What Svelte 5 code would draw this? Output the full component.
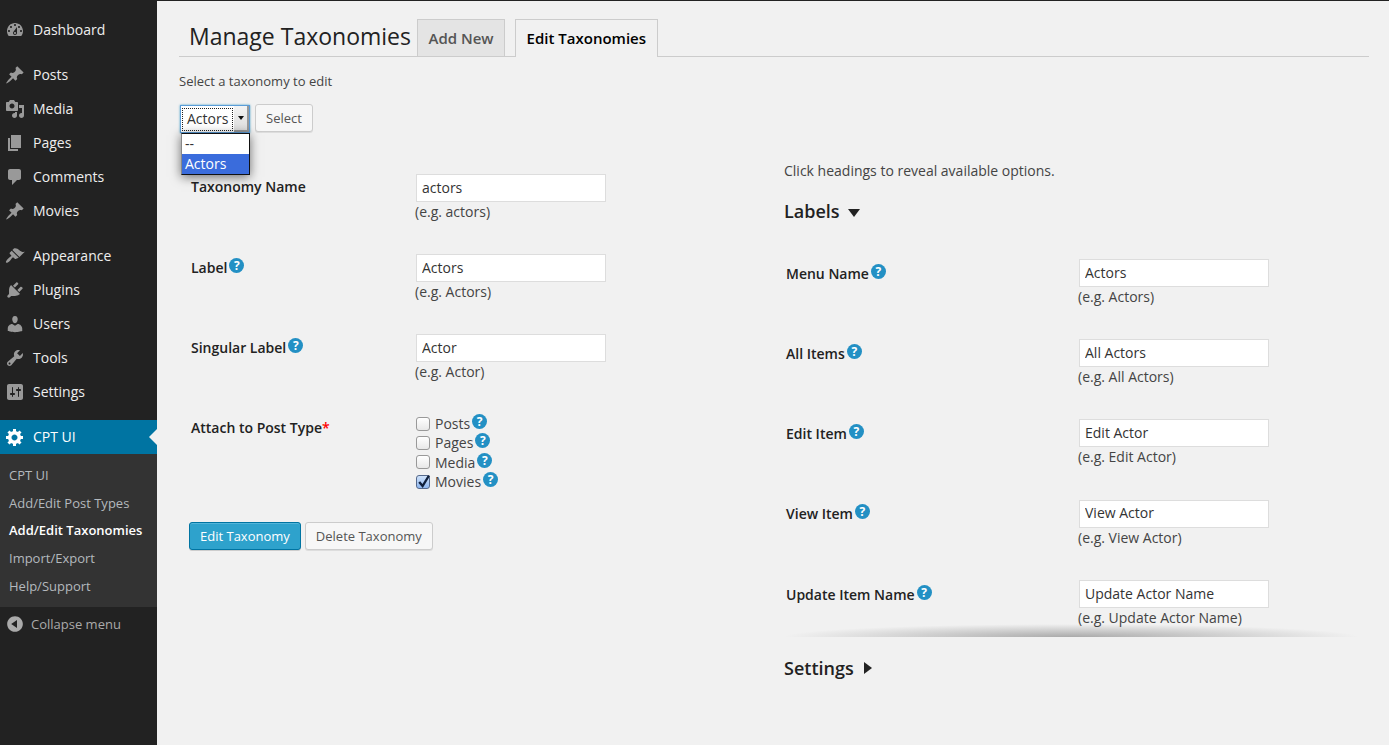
<script>
	const icons = {
		dashboard: 'M3.76 16h12.48c1.1-1.37 1.76-3.11 1.76-5 0-4.42-3.58-8-8-8s-8 3.58-8 8c0 1.89.66 3.63 1.76 5zM10 4c.55 0 1 .45 1 1s-.45 1-1 1-1-.45-1-1 .45-1 1-1zM6 6c.55 0 1 .45 1 1s-.45 1-1 1-1-.45-1-1 .45-1 1-1zm8 0c.55 0 1 .45 1 1s-.45 1-1 1-1-.45-1-1 .45-1 1-1zm-5.37 5.55L12 7v6c0 1.1-.9 2-2 2s-2-.9-2-2c0-.57.24-1.08.63-1.45zM4 10c.55 0 1 .45 1 1s-.45 1-1 1-1-.45-1-1 .45-1 1-1zm12 0c.55 0 1 .45 1 1s-.45 1-1 1-1-.45-1-1 .45-1 1-1zm-5 3c0-.55-.45-1-1-1s-1 .45-1 1 .45 1 1 1 1-.45 1-1z',
		post: 'M10.44 3.02l1.82-1.82 6.36 6.35-1.83 1.82c-1.05-.68-2.48-.57-3.41.36l-.75.75c-.92.93-1.04 2.35-.35 3.41l-1.83 1.82-2.41-2.41-2.8 2.79c-.42.42-3.38 2.71-3.8 2.29s1.86-3.39 2.28-3.81l2.79-2.79L4.1 9.36l1.83-1.82c1.05.69 2.48.57 3.4-.36l.75-.75c.93-.92 1.05-2.35.36-3.41z',
		media: 'M13 11V4c0-.55-.45-1-1-1h-1.67L9 1H5L3.67 3H2c-.55 0-1 .45-1 1v7c0 .55.45 1 1 1h10c.55 0 1-.45 1-1zM7 4.5c1.38 0 2.5 1.12 2.5 2.5S8.38 9.5 7 9.5 4.5 8.38 4.5 7 5.62 4.5 7 4.5zM14 6h5v10.5c0 1.38-1.12 2.5-2.5 2.5S14 17.88 14 16.5s1.12-2.5 2.5-2.5c.17 0 .34.02.5.05V9h-3V6zm-4 8.05V13h2v3.5c0 1.38-1.12 2.5-2.5 2.5S7 17.88 7 16.5 8.12 14 9.5 14c.17 0 .34.02.5.05z',
		page: 'M6 15V2h10v13H6zm-1 1h8v2H3V5h2v11z',
		comments: 'M5 2h9c1.1 0 2 .9 2 2v7c0 1.1-.9 2-2 2h-2l-5 5v-5H5c-1.1 0-2-.9-2-2V4c0-1.1.9-2 2-2z',
		appearance: 'M14.48 11.06L7.41 3.99l1.5-1.5c.5-.56 2.3-.47 3.51.32 1.21.8 1.43 1.28 2.91 2.1 1.18.64 2.45 1.26 4.45.85zm-.71.71L6.7 4.7 4.93 6.47c-.39.39-.39 1.02 0 1.41l1.06 1.06c.39.39.39 1.03 0 1.42-.6.6-1.43 1.11-2.21 1.69-.35.26-.7.53-1.01.84-1.34 1.37-2.37 3.01-1.67 3.7.7.7 2.3-.33 3.67-1.67.31-.31.58-.66.85-1.02.58-.78 1.09-1.61 1.69-2.21.39-.39 1.02-.39 1.41 0l1.06 1.06c.39.39 1.02.39 1.41 0z',
		plugins: 'M13.11 4.36L9.87 7.6 8 5.73l3.24-3.24c.35-.34 1.05-.2 1.56.32.52.51.66 1.21.31 1.55zm-8 1.77l.91-1.12 9.01 9.01-1.19.84c-.71.71-2.63 1.16-3.82 1.16H6.14L4.9 17.26c-.59.59-1.54.59-2.12 0-.59-.58-.59-1.53 0-2.12l1.24-1.24v-3.88c0-1.13.4-3.19 1.09-3.89zm7.26 3.97l3.24-3.24c.34-.35 1.04-.21 1.55.31.52.51.66 1.21.31 1.55l-3.24 3.25z',
		users: 'M10 9.25c-2.27 0-2.73-3.44-2.73-3.44C7 4.02 7.82 2 9.97 2c2.16 0 2.98 2.02 2.71 3.81 0 0-.41 3.44-2.68 3.44zm0 2.57L12.72 10c2.39 0 4.52 2.33 4.52 4.53v2.49s-3.65 1.13-7.24 1.13c-3.65 0-7.24-1.13-7.24-1.13v-2.49c0-2.25 1.94-4.48 4.47-4.48z',
		tools: 'M16.68 9.77c-1.34 1.34-3.3 1.67-4.95.99l-5.41 6.52c-.99.99-2.59.99-3.58 0s-.99-2.59 0-3.57l6.52-5.42c-.68-1.65-.35-3.61.99-4.95 1.28-1.28 3.12-1.62 4.72-1.06l-2.89 2.89 2.82 2.82 2.86-2.87c.53 1.58.18 3.39-1.08 4.65zM3.81 16.21c.4.39 1.04.39 1.43 0 .4-.4.4-1.04 0-1.43-.39-.4-1.03-.4-1.43 0-.39.39-.39 1.03 0 1.43z',
		settings: 'M18 16V4c0-1.1-.9-2-2-2H4c-1.1 0-2 .9-2 2v12c0 1.1.9 2 2 2h12c1.1 0 2-.9 2-2zM8 11h1c.55 0 1 .45 1 1s-.45 1-1 1H8v1.5c0 .28-.22.5-.5.5s-.5-.22-.5-.5V13H6c-.55 0-1-.45-1-1s.45-1 1-1h1V5.5c0-.28.22-.5.5-.5s.5.22.5.5V11zm5-2h-1c-.55 0-1-.45-1-1s.45-1 1-1h1V5.5c0-.28.22-.5.5-.5s.5.22.5.5V7h1c.55 0 1 .45 1 1s-.45 1-1 1h-1v5.5c0 .28-.22.5-.5.5s-.5-.22-.5-.5V9z',
		gear: 'M18 12h-2.18c-.17.7-.44 1.35-.81 1.93l1.54 1.54-2.1 2.1-1.54-1.54c-.58.36-1.23.63-1.91.79V19H8v-2.18c-.68-.16-1.33-.43-1.91-.79l-1.54 1.54-2.12-2.12 1.54-1.54c-.36-.58-.63-1.23-.79-1.91H1V9.03h2.17c.16-.7.44-1.35.8-1.94L2.43 5.55l2.1-2.1 1.54 1.54c.58-.37 1.24-.64 1.93-.81V2h3v2.18c.68.16 1.33.43 1.91.79l1.54-1.54 2.12 2.12-1.54 1.54c.36.59.64 1.24.8 1.94H18V12zm-8.5 1.5c1.66 0 3-1.34 3-3s-1.34-3-3-3-3 1.34-3 3 1.34 3 3 3z',
		collapse: 'M10 2.16c4.33 0 7.84 3.51 7.84 7.84s-3.51 7.84-7.84 7.84S2.16 14.33 2.16 10 5.71 2.16 10 2.16zm2 11.72V6.12L6.18 9.97z'
	};

	const menu = [
		[{ label: 'Dashboard', icon: 'dashboard' }],
		[
			{ label: 'Posts', icon: 'post' },
			{ label: 'Media', icon: 'media' },
			{ label: 'Pages', icon: 'page' },
			{ label: 'Comments', icon: 'comments' },
			{ label: 'Movies', icon: 'post' }
		],
		[
			{ label: 'Appearance', icon: 'appearance' },
			{ label: 'Plugins', icon: 'plugins' },
			{ label: 'Users', icon: 'users' },
			{ label: 'Tools', icon: 'tools' },
			{ label: 'Settings', icon: 'settings' }
		]
	];

	const submenu = ['CPT UI', 'Add/Edit Post Types', 'Add/Edit Taxonomies', 'Import/Export', 'Help/Support'];

	const leftRows = [
		{ label: 'Taxonomy Name', value: 'actors', hint: '(e.g. actors)' },
		{ label: 'Label', value: 'Actors', hint: '(e.g. Actors)', help: true },
		{ label: 'Singular Label', value: 'Actor', hint: '(e.g. Actor)', help: true }
	];

	const rightRows = [
		{ label: 'Menu Name', value: 'Actors', hint: '(e.g. Actors)', help: true },
		{ label: 'All Items', value: 'All Actors', hint: '(e.g. All Actors)', help: true },
		{ label: 'Edit Item', value: 'Edit Actor', hint: '(e.g. Edit Actor)', help: true },
		{ label: 'View Item', value: 'View Actor', hint: '(e.g. View Actor)', help: true },
		{ label: 'Update Item Name', value: 'Update Actor Name', hint: '(e.g. Update Actor Name)', help: true }
	];

	const postTypes = [
		{ label: 'Posts', checked: false },
		{ label: 'Pages', checked: false },
		{ label: 'Media', checked: false },
		{ label: 'Movies', checked: true }
	];
</script>

{#snippet icon(name)}
	<svg class="icon" viewBox="0 0 20 20" width="20" height="20"><path fill-rule="evenodd" d={icons[name]} /></svg>
{/snippet}

{#snippet help()}
	<span class="help">?</span>
{/snippet}

{#snippet field(row)}
	<div class="field">
		<div class="field-label" class:with-help={row.help}>{row.label}{#if row.help}{@render help()}{/if}</div>
		<div class="field-control">
			<input type="text" value={row.value} />
			<span class="hint">{row.hint}</span>
		</div>
	</div>
{/snippet}

<div class="wrap">
	<aside class="sidebar">
		{#each menu as group}
			<ul class="menu-group">
				{#each group as item}
					<li class="menu-item">{@render icon(item.icon)}<span class="menu-text">{item.label}</span></li>
				{/each}
			</ul>
		{/each}
		<div class="menu-item active">
			{@render icon('gear')}<span class="menu-text">CPT UI</span>
			<i class="arrow"></i>
		</div>
		<ul class="submenu">
			{#each submenu as item}
				<li class:current={item === 'Add/Edit Taxonomies'}>{item}</li>
			{/each}
		</ul>
		<div class="collapse">{@render icon('collapse')}<span>Collapse menu</span></div>
	</aside>

	<main class="content">
		<header class="tabs">
			<h2>Manage Taxonomies</h2>
			<span class="tab">Add New</span>
			<span class="tab tab-active">Edit Taxonomies</span>
		</header>

		<p class="intro">Select a taxonomy to edit</p>

		<div class="picker">
			<div class="select">
				<span class="select-value">Actors</span>
				<span class="select-btn"><i></i></span>
				<ul class="options">
					<li>--</li>
					<li class="selected">Actors</li>
				</ul>
			</div>
			<button class="btn">Select</button>
		</div>

		<div class="columns">
			<section class="left">
				{#each leftRows as row}
					{@render field(row)}
				{/each}
				<div class="field attach">
					<div class="field-label">Attach to Post Type<em>*</em></div>
					<div class="checks">
						{#each postTypes as type}
							<div class="check-row">
								<span class="checkbox" class:checked={type.checked}>
									{#if type.checked}
										<svg viewBox="0 0 14 14" width="14" height="14"><path d="M3.2 8l3.4 4L13 1.5" fill="none" stroke="#10203c" stroke-width="2.4" /></svg>
									{/if}
								</span>
								<span>{type.label}</span>{@render help()}
							</div>
						{/each}
					</div>
				</div>
				<div class="actions">
					<button class="btn primary">Edit Taxonomy</button>
					<button class="btn">Delete Taxonomy</button>
				</div>
			</section>

			<section class="right">
				<p class="reveal">Click headings to reveal available options.</p>
				<h3>Labels <i class="caret-down"></i></h3>
				<div class="right-rows">
					{#each rightRows as row}
						{@render field(row)}
					{/each}
				</div>
				<div class="divider"></div>
				<h3 class="settings">Settings <i class="caret-right"></i></h3>
			</section>
		</div>
	</main>
</div>

<style>
	:global(body) {
		margin: 0;
		background: #f1f1f1;
	}

	.wrap {
		display: flex;
		height: 745px;
		overflow: hidden;
		font-family: 'Open Sans', sans-serif;
		font-size: 13px;
		color: #444;
		border-top: 1px solid #222;
		box-sizing: border-box;
	}

	ul {
		list-style: none;
		margin: 0;
		padding: 0;
	}

	.sidebar {
		width: 157px;
		flex: none;
		background: #222;
		padding-top: 12px;
	}

	.menu-group {
		margin-bottom: 11px;
	}

	.menu-item {
		display: flex;
		align-items: center;
		gap: 8px;
		height: 34px;
		padding-left: 5px;
		font-size: 14px;
		color: #eee;
		position: relative;
	}

	.menu-text {
		padding-bottom: 2px;
	}

	.icon {
		fill: #999;
		flex: none;
	}

	.active {
		background: #0074a2;
		color: #fff;
	}

	.active .icon {
		fill: #fff;
	}

	.arrow {
		position: absolute;
		right: 0;
		top: 9px;
		border: 8px solid transparent;
		border-right-color: #f1f1f1;
		border-left-width: 0;
	}

	.submenu {
		background: #333;
		padding: 8px 0 6px 9px;
		height: 139px;
	}

	.submenu li {
		height: 27.7px;
		line-height: 27px;
		color: #b4b9be;
		white-space: nowrap;
	}

	.submenu .current {
		color: #fff;
		font-weight: 600;
	}

	.collapse {
		display: flex;
		align-items: center;
		gap: 6px;
		height: 34px;
		padding-left: 5px;
		color: #aaa;
	}

	.collapse .icon {
		fill: #aaa;
	}

	.content {
		flex: 1;
		min-width: 0;
		padding: 0 20px 0 22px;
	}

	.tabs {
		display: flex;
		align-items: flex-end;
		height: 55px;
		padding-left: 10px;
		border-bottom: 1px solid #ccc;
	}

	h2 {
		margin: 0 6px 4px 0;
		font-size: 23px;
		font-weight: 400;
		line-height: 32px;
		color: #222;
	}

	.tab {
		height: 36px;
		line-height: 36px;
		padding: 0 10.5px;
		margin-right: 10px;
		font-size: 15px;
		font-weight: 600;
		color: #555;
		background: #e4e4e4;
		border: 1px solid #ccc;
		border-bottom: 0;
	}

	.tab-active {
		color: #000;
		background: #f1f1f1;
		height: 37px;
		margin-bottom: -1px;
		position: relative;
	}

	.intro {
		margin: 0;
		padding-top: 14px;
		line-height: 20px;
	}

	.picker {
		display: flex;
		gap: 5px;
		align-items: flex-start;
		margin: 13px 0 0 1px;
	}

	.select {
		position: relative;
		display: flex;
		align-items: center;
		width: 70px;
		height: 28px;
		box-sizing: border-box;
		margin-top: 1px;
		background: #fff;
		border: 1px solid #5b9dd9;
		box-shadow: 0 0 2px rgba(30, 140, 190, 0.8);
		font-size: 14px;
		color: #333;
	}

	.select-value {
		margin-left: 2px;
		padding: 0 4px 2px 4px;
		line-height: 19px;
		outline: 1px dotted #222;
	}

	.select-btn {
		position: absolute;
		right: 0;
		top: 0;
		bottom: 0;
		width: 15px;
		display: flex;
		align-items: center;
		justify-content: center;
		background: linear-gradient(#f4f4f4, #ddd);
		border-right: 2px solid #999;
		border-bottom: 2px solid #999;
		box-sizing: border-box;
	}

	.select-btn i {
		border: 3px solid transparent;
		border-top: 4px solid #111;
		border-bottom: 0;
	}

	.options {
		position: absolute;
		left: 0;
		top: 27px;
		width: 67px;
		z-index: 2;
		background: #fff;
		border: 1px solid #111;
		border-left-color: #888;
		box-shadow: 0 2px 10px rgba(0, 0, 0, 0.55);
	}

	.options li {
		height: 20px;
		line-height: 20px;
		padding-left: 3px;
		font-size: 14px;
		color: #333;
	}

	.options .selected {
		background: #3a6cdc;
		color: #fff;
	}

	.btn {
		height: 28px;
		padding: 0 10px;
		font: 13px 'Open Sans', sans-serif;
		color: #555;
		background: #f7f7f7;
		border: 1px solid #ccc;
		border-radius: 3px;
		box-shadow: 0 1px 0 #ddd;
	}

	.primary {
		color: #fff;
		background: #2ea2cc;
		border-color: #0074a2;
		box-shadow: inset 0 1px 0 rgba(120, 200, 230, 0.5), 0 1px 0 rgba(0, 0, 0, 0.15);
	}

	.columns {
		display: grid;
		grid-template-columns: 605px 1fr;
	}

	.left {
		padding: 41px 0 0 12px;
	}

	.field {
		display: flex;
		height: 80px;
	}

	.field-label {
		width: 225px;
		flex: none;
		padding-top: 3px;
		font-size: 14px;
		font-weight: 600;
		color: #222;
		line-height: 20px;
	}

	.field-label.with-help {
		padding-top: 4px;
	}

	.right .field-label {
		width: 293px;
		padding-top: 4.5px;
	}

	.field-control {
		display: flex;
		flex-direction: column;
		align-items: flex-start;
	}

	input {
		width: 190px;
		height: 28px;
		box-sizing: border-box;
		padding: 0 5px 2px;
		font: 14px 'Open Sans', sans-serif;
		color: #333;
		background: #fff;
		border: 1px solid #ddd;
		outline: none;
	}

	.hint {
		margin-left: -1px;
		line-height: 20px;
		font-size: 14px;
	}

	.help {
		display: inline-block;
		width: 15px;
		height: 15px;
		margin-left: 2px;
		border-radius: 50%;
		background: #2390c4;
		color: #fff;
		font: 700 12px/15px 'Open Sans', sans-serif;
		text-align: center;
		vertical-align: 3px;
	}

	.attach {
		height: 108px;
	}

	.attach em {
		font-style: normal;
		color: #f00;
	}

	.attach .field-label {
		padding-top: 4px;
	}

	.checks {
		font-size: 14px;
		line-height: 19.3px;
	}

	.check-row {
		display: flex;
		align-items: center;
		height: 19.3px;
		white-space: nowrap;
	}

	.check-row .help {
		margin-top: -4px;
		vertical-align: 0;
	}

	.checkbox {
		width: 14px;
		height: 14px;
		margin-right: 5px;
		box-sizing: border-box;
		border: 1px solid #999;
		border-radius: 3px;
		background: linear-gradient(#fff, #e8e8e8);
		position: relative;
	}

	.checkbox svg {
		position: absolute;
		left: -1px;
		top: -2px;
		overflow: visible;
	}

	.checked {
		background: linear-gradient(#cfe2fa, #8fb7ef);
		border-color: #55698c;
	}

	.actions {
		display: flex;
		gap: 4px;
		margin-left: -2px;
	}

	.right {
		padding-top: 28px;
	}

	.reveal {
		margin: 0;
		line-height: 20px;
		font-size: 14px;
	}

	h3 {
		margin: 17px 0 0;
		font-size: 18px;
		font-weight: 600;
		line-height: 26px;
		color: #222;
	}

	.caret-down,
	.caret-right {
		display: inline-block;
		vertical-align: 1px;
		border: 5px solid transparent;
	}

	.caret-down {
		margin-left: 4px;
		border-top: 8px solid #222;
		border-bottom: 0;
		border-width: 8px 6px 0;
	}

	.caret-right {
		margin-left: 6px;
		border-left: 8px solid #222;
		border-right: 0;
		border-width: 6px 0 6px 8px;
	}

	.right-rows {
		padding: 35px 0 0 2px;
	}

	.right-rows .field:nth-child(4),
	.right-rows .field:nth-child(3) {
		height: 80.5px;
	}

	.divider {
		height: 13px;
		margin: -36px 10px 0 0;
		background: radial-gradient(ellipse 50% 100% at 50% 100%, #aaa, rgba(170, 170, 170, 0) 100%);
	}

	.settings {
		margin-top: 18px;
	}
</style>
